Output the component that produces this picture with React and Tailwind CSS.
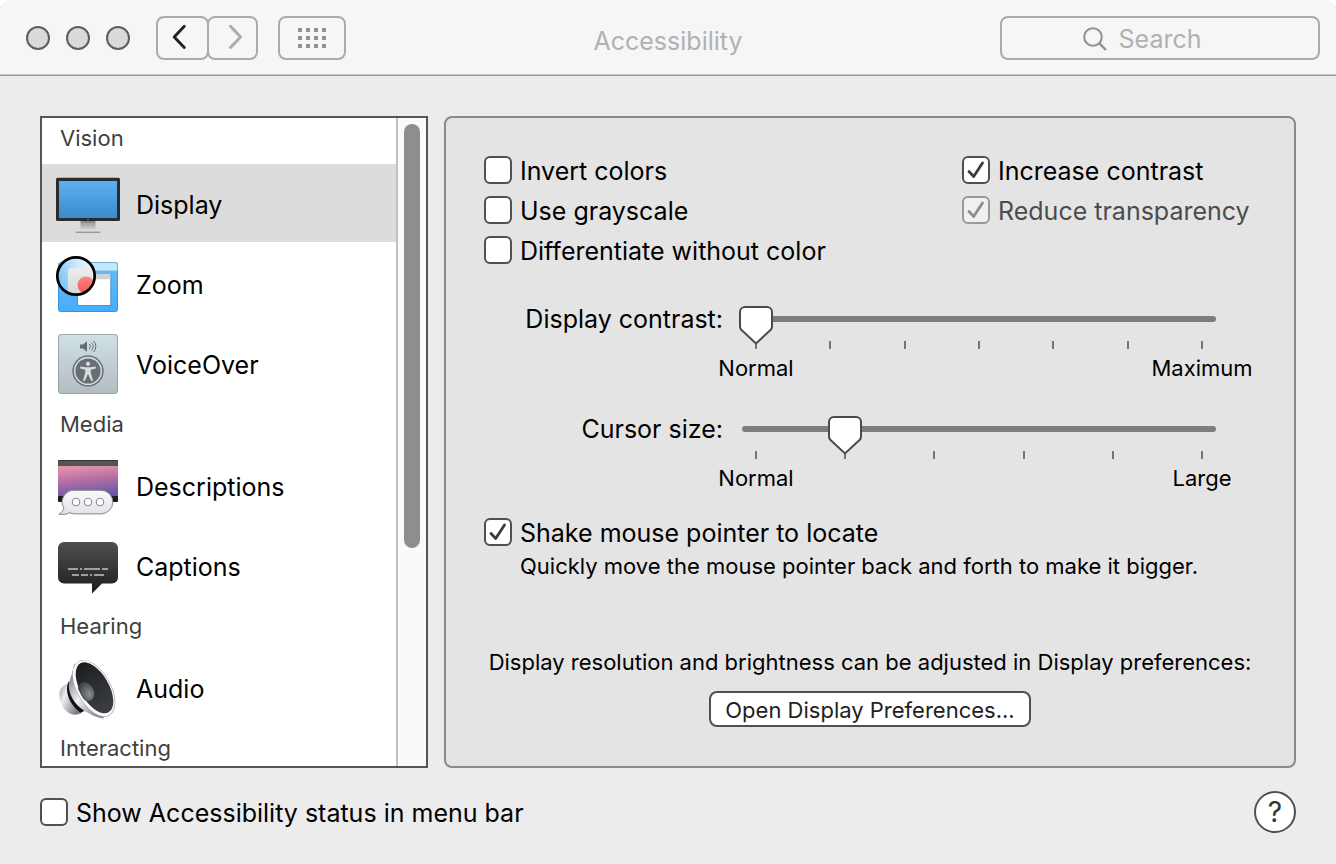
import { useState } from "react";

function DisplayIcon() {
  return (
    <svg viewBox="0 0 64 64" className="size-16 shrink-0" aria-hidden="true">
      <defs>
        <linearGradient id="scr" x1="0" y1="0" x2="0" y2="1">
          <stop offset="0" stopColor="#5bb0f3" />
          <stop offset="1" stopColor="#3c8bcd" />
        </linearGradient>
        <linearGradient id="neck" x1="0" y1="0" x2="0" y2="1">
          <stop offset="0" stopColor="#8e8e8e" />
          <stop offset="1" stopColor="#d6d6d6" />
        </linearGradient>
      </defs>
      <path d="M24.500 49.500h15v6.500c0 1.200 1 2 2.500 2.300l2.500 .7h-25l2.500-.7c1.500-.3 2.500-1.100 2.500-2.300z" fill="url(#neck)" />
      <rect x="19.500" y="58.500" width="25" height="2.500" rx="0.500" fill="#dedede" />
      <path d="M19.500 61.200h25" stroke="#7f7f7f" strokeWidth="1" />
      <path d="M25 50.500h14" stroke="#858585" strokeWidth="2" />
      <rect x="0" y="6.700" width="64" height="43.200" rx="1.500" fill="#2a2b2c" />
      <rect x="3" y="10" width="58" height="37" fill="url(#scr)" />
      <circle cx="32" cy="48.500" r="0.700" fill="#8c8c8c" />
    </svg>
  );
}

function ZoomIcon() {
  return (
    <svg viewBox="0 0 64 64" className="size-16 shrink-0" aria-hidden="true">
      <defs>
        <linearGradient id="zbg" x1="0" y1="0" x2="0" y2="1">
          <stop offset="0" stopColor="#6bbcf5" />
          <stop offset="1" stopColor="#45adfb" />
        </linearGradient>
        <linearGradient id="lens" x1="0" y1="0.600" x2="1" y2="0.200">
          <stop offset="0" stopColor="#74c2f6" />
          <stop offset="0.600" stopColor="#cfeafb" />
          <stop offset="1" stopColor="#eef8fe" />
        </linearGradient>
        <linearGradient id="lwin" x1="0" y1="0" x2="0" y2="1">
          <stop offset="0" stopColor="#ededed" />
          <stop offset="1" stopColor="#cfd3d6" />
        </linearGradient>
        <linearGradient id="red" x1="0" y1="0" x2="0" y2="1">
          <stop offset="0" stopColor="#ff8680" />
          <stop offset="1" stopColor="#f55650" />
        </linearGradient>
        <clipPath id="lensClip">
          <circle cx="20" cy="25" r="18" />
        </clipPath>
      </defs>
      <rect x="2" y="11" width="60" height="50" rx="3" fill="url(#zbg)" />
      <path d="M2 19.500v-5.500a3 3 0 0 1 3-3h54a3 3 0 0 1 3 3v5.500z" fill="#c5e9fa" />
      <rect x="2.500" y="11.500" width="59" height="49" rx="2.500" fill="none" stroke="#2f7db5" strokeOpacity="0.550" />
      <rect x="21" y="23" width="34.500" height="32" rx="1.500" fill="#24679c" opacity="0.350" />
      <rect x="22" y="23" width="32.300" height="31" rx="1" fill="#fff" />
      <rect x="22" y="23" width="32.300" height="5.300" rx="1" fill="#cfd2d5" />
      <circle cx="20" cy="25" r="18.500" fill="url(#lens)" />
      <g clipPath="url(#lensClip)">
        <path d="M12 50V21a4 4 0 0 1 4-4h30v33z" fill="url(#lwin)" />
        <circle cx="30" cy="34" r="8.500" fill="url(#red)" />
      </g>
      <circle cx="20" cy="25" r="18.700" fill="none" stroke="#000" strokeWidth="2.700" />
    </svg>
  );
}

function VoiceOverIcon() {
  return (
    <svg viewBox="0 0 64 64" className="size-16 shrink-0" aria-hidden="true">
      <defs>
        <linearGradient id="vo" x1="0" y1="0" x2="0" y2="1">
          <stop offset="0" stopColor="#cfe0e6" />
          <stop offset="1" stopColor="#b3bdbf" />
        </linearGradient>
      </defs>
      <rect x="2" y="3" width="60" height="60" rx="4" fill="#8e9a9e" />
      <rect x="2.800" y="3.800" width="58.400" height="58.400" rx="3.500" fill="url(#vo)" />
      <path d="M24 13.500h3l4-3.200v10.400l-4-3.200h-3z" fill="#656d70" />
      <path d="M33.300 13a3.500 3.500 0 0 1 0 5M35.500 11.600a6 6 0 0 1 0 7.800M37.800 10a8.500 8.500 0 0 1 0 11" fill="none" stroke="#656d70" strokeWidth="1" />
      <circle cx="32" cy="40" r="14.900" fill="#d3dde0" stroke="#687073" strokeWidth="1.500" />
      <circle cx="32" cy="40" r="12.600" fill="#687073" />
      <circle cx="32" cy="32.800" r="2.100" fill="#d3dde0" />
      <path d="M24.200 35.500c4 1.100 11.600 1.100 15.600 0v1.900l-5 1.400v3.400l2.300 7.400-1.900.5-3.200-7.100-3.200 7.100-1.900-.5 2.300-7.400v-3.400l-5-1.400z" fill="#d3dde0" />
    </svg>
  );
}

function DescriptionsIcon() {
  return (
    <svg viewBox="0 0 64 64" className="size-16 shrink-0" aria-hidden="true">
      <defs>
        <linearGradient id="sky" x1="0.400" y1="0" x2="0.600" y2="1">
          <stop offset="0" stopColor="#e493a9" />
          <stop offset="0.450" stopColor="#b36fa5" />
          <stop offset="1" stopColor="#6857a8" />
        </linearGradient>
        <linearGradient id="bub" x1="0" y1="0" x2="0" y2="1">
          <stop offset="0" stopColor="#fafafc" />
          <stop offset="1" stopColor="#dfe2e8" />
        </linearGradient>
      </defs>
      <rect x="2" y="7" width="60" height="42" rx="1" fill="#1d1c20" />
      <rect x="2" y="7" width="60" height="6" rx="1" fill="#545454" />
      <path d="M2.500 7.500h59" stroke="#353535" />
      <rect x="2" y="13" width="60" height="30" fill="url(#sky)" />
      <path d="M19 37.300h26a11.800 11.800 0 0 1 0 23.600H19c-2 0-3.700-.5-5.300-1.200-3 1.600-6.700 2.200-10.900 1.500 2.700-1.500 4.400-3.500 5.100-6A11.800 11.800 0 0 1 19 37.300z" fill="url(#bub)" stroke="#85878f" strokeWidth="1" />
      <g fill="#fdfdfe" stroke="#8b8d94" strokeWidth="1.100">
        <circle cx="20" cy="49" r="3.700" />
        <circle cx="32" cy="49" r="3.700" />
        <circle cx="44" cy="49" r="3.700" />
      </g>
    </svg>
  );
}

function CaptionsIcon() {
  return (
    <svg viewBox="0 0 64 64" className="size-16 shrink-0" aria-hidden="true">
      <defs>
        <linearGradient id="cap" x1="0" y1="0" x2="0" y2="1">
          <stop offset="0" stopColor="#4f4f4f" />
          <stop offset="1" stopColor="#1d1d1d" />
        </linearGradient>
      </defs>
      <path d="M8 9h48a6 6 0 0 1 6 6v29.500a6 6 0 0 1-6 6H46L36 60.500v-10H8a6 6 0 0 1-6-6V15a6 6 0 0 1 6-6z" fill="url(#cap)" />
      <path d="M12 36h10M24 36h2M28 36h16M46 36h6M16 42h7M25 42h7M34 42h2M38 42h10" stroke="#c4c4c4" strokeWidth="1.700" />
    </svg>
  );
}

function AudioIcon() {
  return (
    <svg viewBox="0 0 64 64" className="size-16 shrink-0" aria-hidden="true">
      <defs>
        <linearGradient id="mag" x1="0" y1="0" x2="1" y2="0.600">
          <stop offset="0" stopColor="#9d9da5" />
          <stop offset="0.350" stopColor="#ececf2" />
          <stop offset="1" stopColor="#77777f" />
        </linearGradient>
        <linearGradient id="cone" x1="0" y1="0.300" x2="0.700" y2="1">
          <stop offset="0" stopColor="#8d8d94" />
          <stop offset="0.450" stopColor="#f1f1f5" />
          <stop offset="1" stopColor="#8b8b92" />
        </linearGradient>
        <linearGradient id="dark" x1="0" y1="0" x2="1" y2="0">
          <stop offset="0" stopColor="#1c1e20" />
          <stop offset="1" stopColor="#3d4043" />
        </linearGradient>
        <radialGradient id="dome" cx="0.700" cy="0.400" r="0.700">
          <stop offset="0" stopColor="#8a8f92" />
          <stop offset="1" stopColor="#3b3e40" />
        </radialGradient>
        <clipPath id="coneClip">
          <ellipse cx="38.500" cy="32.800" rx="28.300" ry="15.300" transform="rotate(61 38.500 32.800)" />
        </clipPath>
      </defs>
      <path d="M11 29c-5 2-8 6-7.700 11C4 50 9 58.500 18 59.700c3 .2 6-.8 8-2.200z" fill="url(#mag)" />
      <path d="M12.500 27c-3.500 6-1.500 21 12 30.500l4-1.500L17 26z" fill="#111" />
      <path d="M18 9C17 18 14 23 12.800 29c-.8 9 5.200 20 15 26.500C35 60 42 63 48 63.500l-8-20L26 12z" fill="url(#cone)" />
      <ellipse cx="37.800" cy="33.500" rx="31.300" ry="17" transform="rotate(60 37.800 33.500)" fill="#a1a1a8" />
      <ellipse cx="37.700" cy="33.300" rx="30.700" ry="16.400" transform="rotate(60 37.700 33.300)" fill="#fbfbfd" />
      <ellipse cx="38.500" cy="32.800" rx="28.300" ry="14.300" transform="rotate(60 38.500 32.800)" fill="url(#dark)" />
      <g clipPath="url(#coneClip)">
        <ellipse cx="30" cy="36.500" rx="10" ry="7.500" transform="rotate(61 30 36.500)" fill="url(#dome)" />
      </g>
    </svg>
  );
}

const groups = [
  { title: "Vision", items: [["Display", DisplayIcon], ["Zoom", ZoomIcon], ["VoiceOver", VoiceOverIcon]] },
  { title: "Media", items: [["Descriptions", DescriptionsIcon], ["Captions", CaptionsIcon]] },
  { title: "Hearing", items: [["Audio", AudioIcon]] },
  { title: "Interacting", items: [] },
];

function Sidebar() {
  const [selected, setSelected] = useState("Display");
  return (
    <nav aria-label="Accessibility features" className="flex w-[388px] shrink-0 border-2 border-[#555] bg-white">
      <div className="flex flex-1 flex-col gap-0.5 overflow-y-auto contain-size [scrollbar-width:none]">
        {groups.map((g, i) => (
          <section key={g.title} className="flex flex-col gap-0.5">
            <h2 className={"shrink-0 pl-[18px] text-[22px] leading-10 text-[#404040] " + (i === 0 ? "h-11" : "h-10")}>
              {g.title}
            </h2>
            {g.items.map(([name, Icon]) => (
              <button
                key={name}
                type="button"
                aria-pressed={selected === name}
                onClick={() => setSelected(name)}
                className={"flex h-[78px] shrink-0 items-center gap-4 pl-3.5 text-left " + (selected === name ? "bg-[#dcdcdc]" : "")}
              >
                <Icon />
                <span className="pt-1">{name}</span>
              </button>
            ))}
          </section>
        ))}
      </div>
      <div className="w-[30px] border-l-2 border-[#c1c1c1] bg-[#fafafa] px-1.5 py-1.5">
        <div className="h-2/3 w-4 rounded-full bg-[#8e8e8e]" />
      </div>
    </nav>
  );
}

function Checkbox({ label, defaultChecked = false, disabled = false }) {
  return (
    <label className={"flex h-10 items-center gap-2 whitespace-nowrap " + (disabled ? "text-[#4c4c4c]" : "text-black")}>
      <span className={"grid shrink-0 " + (disabled ? "text-[#8e8e8e]" : "text-[#3c3c3c]")}>
        <input
          type="checkbox"
          defaultChecked={defaultChecked}
          disabled={disabled}
          className="peer col-start-1 row-start-1 size-7 appearance-none rounded-md border-2 border-[#505050] bg-white disabled:border-[#999] disabled:bg-[#f0f0f0]"
        />
        <svg viewBox="0 0 28 28" className="pointer-events-none invisible col-start-1 row-start-1 size-7 peer-checked:visible" aria-hidden="true">
          <path d="M7 15.500l4.700 5L20.500 7" fill="none" stroke="currentColor" strokeWidth="2.800" strokeLinecap="round" strokeLinejoin="round" />
        </svg>
      </span>
      <span className="pt-0.5">{label}</span>
    </label>
  );
}

function Slider({ id, label, steps, initial, low, high }) {
  const [value, setValue] = useState(initial);
  return (
    <div className="flex gap-[19px] pr-10">
      <label htmlFor={id} className="w-[239px] shrink-0 text-right leading-[42px]">
        {label}
      </label>
      <div className="flex-1 text-[22px]">
        <div className="relative flex h-[42px] items-center">
          <div className="h-1.5 w-full rounded-full bg-[#7e7e7e]" />
          <div className="absolute inset-x-3.5 top-2 z-10">
            <svg
              viewBox="0 0 34 40"
              className="relative h-10 w-[34px] -translate-x-1/2"
              style={{ left: `${(value / (steps - 1)) * 100}%` }}
              aria-hidden="true"
            >
              <path d="M6 1h22a5 5 0 0 1 5 5v14.500c0 1.500-.5 2.500-1.500 3.500L17 37.500 2.500 24C1.500 23 1 22 1 20.500V6a5 5 0 0 1 5-5z" fill="#fff" stroke="#4a4a4a" strokeWidth="2" />
            </svg>
          </div>
          <input
            id={id}
            type="range"
            min="0"
            max={steps - 1}
            value={value}
            onChange={(e) => setValue(Number(e.target.value))}
            className="absolute inset-0 z-20 w-full opacity-0"
          />
        </div>
        <div className="mt-px flex justify-between px-[13px]">
          {Array.from({ length: steps }, (_, i) => (
            <span key={i} className="h-2 w-0.5 bg-[#757575]" />
          ))}
        </div>
        <div className="mt-[5px] flex justify-between px-[13px] leading-7">
          <span className="flex w-0.5 justify-center">{low}</span>
          <span className="flex w-0.5 justify-center">{high}</span>
        </div>
      </div>
    </div>
  );
}

function Toolbar() {
  return (
    <header className="grid h-[76px] grid-cols-[1fr_auto_1fr] items-center rounded-t-[10px] border-b border-[#999] bg-[#f6f6f6] shadow-[inset_0_-1px_0_#c8c8c8]">
      <div className="flex items-center pl-[26px]">
        <div className="flex gap-4">
          {["Close", "Minimize", "Full screen"].map((n) => (
            <button key={n} type="button" aria-label={n} className="size-6 rounded-full border-2 border-[#5e5e5e] bg-[#dadada]" />
          ))}
        </div>
        <div className="ml-[26px] flex">
          <button type="button" aria-label="Back" className="grid h-11 w-[53px] place-items-center rounded-lg border-2 border-[#ababab]">
            <svg viewBox="0 0 24 28" className="h-7 w-6" aria-hidden="true">
              <path d="M13.300 2.300L3.200 12.900l10.100 10.600" fill="none" stroke="#222" strokeWidth="2.900" strokeLinecap="round" strokeLinejoin="round" />
            </svg>
          </button>
          <button type="button" aria-label="Forward" disabled className="-ml-0.5 grid h-11 w-[51px] place-items-center rounded-lg border-2 border-[#ababab]">
            <svg viewBox="0 0 24 28" className="h-7 w-6" aria-hidden="true">
              <path d="M9.500 2.300l10.100 10.600L9.500 23.500" fill="none" stroke="#ababab" strokeWidth="2.900" strokeLinecap="round" strokeLinejoin="round" />
            </svg>
          </button>
        </div>
        <button type="button" aria-label="Show all" className="ml-5 grid h-11 w-[68px] place-items-center rounded-lg border-2 border-[#ababab]">
          <svg viewBox="0 0 28 20" className="h-5 w-7" fill="#909090" aria-hidden="true">
            {[0, 8, 16].map((y) => [0, 8, 16, 24].map((x) => <rect key={x + "-" + y} x={x} y={y} width="4" height="4" />))}
          </svg>
        </button>
      </div>
      <h1 className="pt-1.5 text-[#b1b1b1]">Accessibility</h1>
      <div className="flex justify-end pr-4">
        <label className="flex h-11 w-80 items-center justify-center gap-3 rounded-lg border-2 border-[#ababab] pt-0.5 pr-9">
          <svg viewBox="0 0 24 24" className="size-6 shrink-0" fill="none" stroke="#909090" strokeWidth="2" aria-hidden="true">
            <circle cx="10" cy="10" r="8.800" />
            <path d="M16.300 16.300L23 23" strokeWidth="2.400" />
          </svg>
          <input type="text" aria-label="Search" placeholder="Search" className="field-sizing-content bg-transparent outline-none placeholder:text-[#b1b1b1] placeholder:opacity-100" />
        </label>
      </div>
    </header>
  );
}

export default function App() {
  return (
    <div className="flex min-h-screen flex-col rounded-t-[10px] bg-[linear-gradient(#fff_20px,#ececec_20px)] font-[Inter,'Liberation_Sans',sans-serif] text-[25px] leading-8 text-black">
      <Toolbar />
      <main className="flex flex-1 gap-4 px-10 pt-10">
        <Sidebar />
        <section aria-label="Display" className="flex-1 rounded-lg border-2 border-[#8a8a8a] bg-[#e4e4e4] px-[38px] pt-8 pb-9">
          <div className="flex justify-between">
            <div>
              <Checkbox label="Invert colors" />
              <Checkbox label="Use grayscale" />
              <Checkbox label="Differentiate without color" />
            </div>
            <div className="w-[294px]">
              <Checkbox label="Increase contrast" defaultChecked />
              <Checkbox label="Reduce transparency" defaultChecked disabled />
            </div>
          </div>
          <div className="mt-7 flex flex-col gap-[26px]">
            <Slider id="contrast" label="Display contrast:" steps={7} initial={0} low="Normal" high="Maximum" />
            <Slider id="cursor" label="Cursor size:" steps={6} initial={1} low="Normal" high="Large" />
          </div>
          <div className="mt-5">
            <Checkbox label="Shake mouse pointer to locate" defaultChecked />
            <p className="pl-9 text-[22px] leading-7 whitespace-nowrap">Quickly move the mouse pointer back and forth to make it bigger.</p>
          </div>
          <div className="mt-17 flex flex-col items-center text-[22px] leading-7">
            <p className="whitespace-nowrap">Display resolution and brightness can be adjusted in Display preferences:</p>
            <button type="button" className="mt-[15px] h-9 rounded-lg border-2 border-[#505050] bg-white px-3.5 pt-0.5 text-[#222]">
              Open Display Preferences...
            </button>
          </div>
        </section>
      </main>
      <footer className="flex h-24 items-center justify-between px-10 pb-2">
        <Checkbox label="Show Accessibility status in menu bar" />
        <button type="button" aria-label="Help" className="size-[42px] rounded-full border-2 border-[#505050] bg-white text-[28px] text-[#333]">
          ?
        </button>
      </footer>
    </div>
  );
}
